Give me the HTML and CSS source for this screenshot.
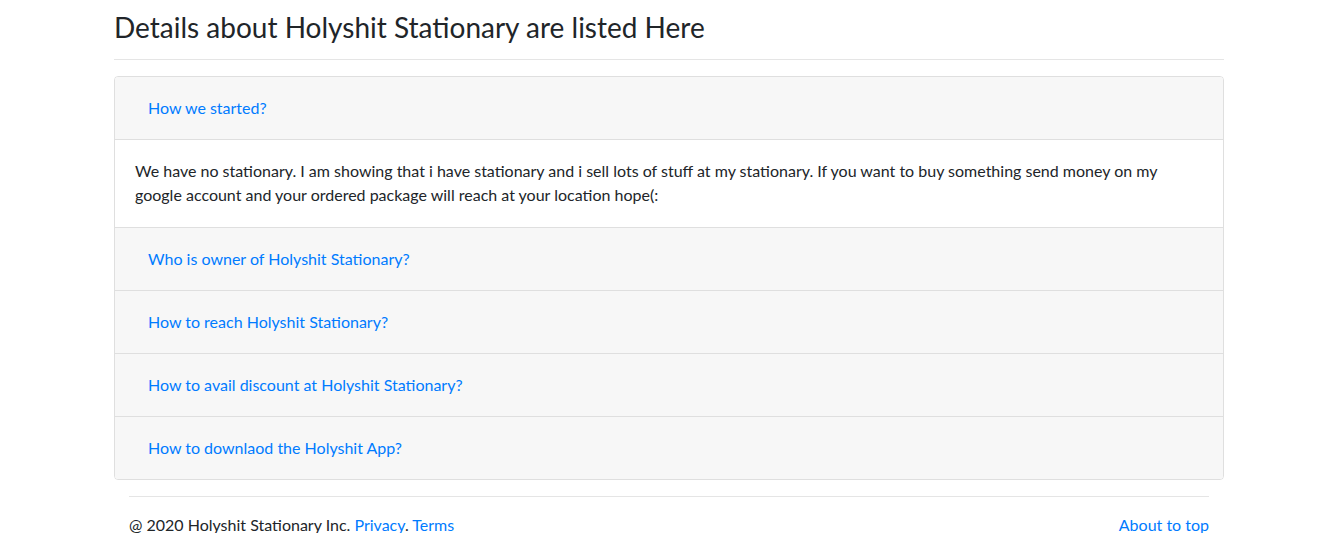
FILE: index.html
```html
<!DOCTYPE html>
<html lang="en">
<head>
<meta charset="utf-8">
<title>Holyshit Stationary - About</title>
<link rel="stylesheet" href="styles.css">
</head>
<body>
<div class="page">
  <h2 class="title">Details about Holyshit Stationary are listed Here</h2>
  <hr class="rule">
  <div class="accordion">
    <div class="acc-item">
      <div class="acc-header"><a class="acc-btn" href="#">How we started?</a></div>
      <div class="acc-body">We have no stationary. I am showing that i have stationary and i sell lots of stuff at my stationary. If you want to buy something send money on my google account and your ordered package will reach at your location hope(:</div>
    </div>
    <div class="acc-item">
      <div class="acc-header"><a class="acc-btn" href="#">Who is owner of Holyshit Stationary?</a></div>
    </div>
    <div class="acc-item">
      <div class="acc-header"><a class="acc-btn" href="#">How to reach Holyshit Stationary?</a></div>
    </div>
    <div class="acc-item">
      <div class="acc-header"><a class="acc-btn" href="#">How to avail discount at Holyshit Stationary?</a></div>
    </div>
    <div class="acc-item">
      <div class="acc-header"><a class="acc-btn" href="#">How to downlaod the Holyshit App?</a></div>
    </div>
  </div>
  <footer class="footer">
    <hr class="foot-rule">
    <div class="foot-row">
      <p class="copy">@ 2020 Holyshit Stationary Inc. <a href="#">Privacy</a>. <a href="#">Terms</a></p>
      <a class="top-link" href="#">About to top</a>
    </div>
  </footer>
</div>
</body>
</html>
```
FILE: styles.css
```css
html, body {
  margin: 0;
  background: #fff;
}
body {
  padding-left: 4px;
  font-family: Lato, "Open Sans", sans-serif;
  font-size: 16px;
  line-height: 1.5;
  color: #212529;
}
a {
  color: #007bff;
  text-decoration: none;
}
.page {
  width: 1110px;
  margin: 0 auto;
}
.title {
  margin: 9px 0 0;
  font-size: 28px;
  font-weight: 400;
  line-height: 36px;
  color: #212529;
}
.rule {
  margin: 14px 0 16px;
  border: 0;
  border-top: 1px solid rgba(0,0,0,.1);
}
.accordion {
  border: 1px solid rgba(0,0,0,.125);
  border-radius: 4px;
  overflow: hidden;
}
.acc-item + .acc-item {
  border-top: 1px solid rgba(0,0,0,.125);
}
.acc-header {
  padding: 12px 20px;
  background: #f7f7f7;
}
.acc-btn {
  display: inline-block;
  padding: 6px 12px;
  border: 1px solid transparent;
  line-height: 24px;
}
.acc-body {
  padding: 19px 20px 20px;
  border-top: 1px solid rgba(0,0,0,.125);
}
.footer {
  padding: 0 15px;
}
.foot-rule {
  margin: 16px 0;
  border: 0;
  border-top: 1px solid rgba(0,0,0,.1);
}
.foot-row {
  display: flex;
  justify-content: space-between;
  align-items: flex-start;
}
.copy {
  margin: 0;
}
```
